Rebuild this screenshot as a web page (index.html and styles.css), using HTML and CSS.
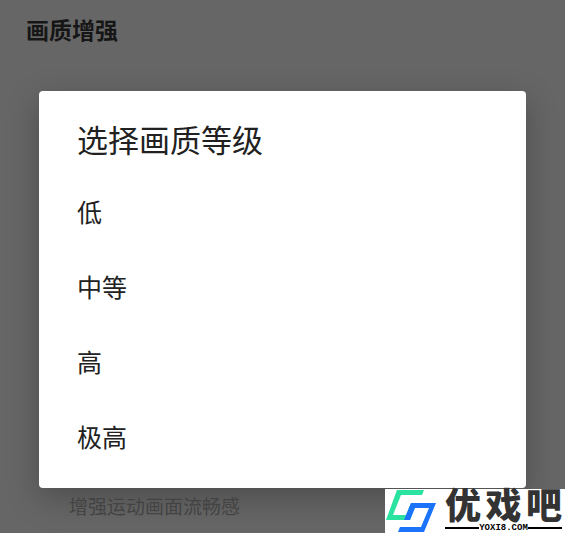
FILE: index.html
```html
<!DOCTYPE html>
<html lang="zh-CN">
<head>
    <meta charset="UTF-8">
    <meta name="viewport" content="width=device-width, initial-scale=1.0">
    <title>画质增强</title>
    <link rel="stylesheet" href="styles.css">
</head>
<body>

    <header class="page-header">
        <h1>画质增强</h1>
    </header>

    <div class="dialog" role="dialog" aria-labelledby="dialogTitle">
        <h2 id="dialogTitle">选择画质等级</h2>
        <ul class="options">
            <li><button type="button">低</button></li>
            <li><button type="button">中等</button></li>
            <li><button type="button">高</button></li>
            <li><button type="button">极高</button></li>
        </ul>
    </div>

    <p class="description">增强运动画面流畅感</p>

    <div class="watermark">
        <svg class="logo" viewBox="0 0 54 44" aria-hidden="true">
            <path fill="#2be3a0" d="M12 1H39L37 6H16L8 26H21L26 14H31L25 31H1Z"/>
            <path fill="#1a73f8" d="M26 14H51L39 43H13L15 38H36L44 19H30L25 31H19Z"/>
        </svg>
        <div class="brand">
            <div class="brand-name">
                <span>优</span>
                <span>戏</span>
                <span>吧</span>
            </div>
            <span class="brand-site">YOXI8.COM</span>
        </div>
    </div>

</body>
</html>
```

FILE: styles.css
```css
* {
    margin: 0;
    padding: 0;
    box-sizing: border-box;
}

body {
    font-family: "Noto Sans CJK SC", sans-serif;
    background: #666;
    color: #212121;
    min-height: 100vh;
    overflow: hidden;
}

.page-header {
    padding: 13px 26px 46px;
}

h1 {
    font-size: 23px;
    line-height: 32px;
    font-weight: bold;
    color: #161616;
}

.dialog {
    margin: 0 39px;
    padding: 24px 0 14px;
    background: #fff;
    border-radius: 4px;
    box-shadow: 0 10px 32px rgba(0, 0, 0, 0.25);
}

h2 {
    padding: 0 38px;
    margin-bottom: 11px;
    font-size: 31px;
    line-height: 48px;
    font-weight: normal;
}

.options {
    list-style: none;
}

.options button {
    display: block;
    width: 100%;
    padding: 0 38px;
    border: none;
    background: none;
    font-family: inherit;
    font-size: 25px;
    line-height: 75px;
    color: #212121;
    text-align: left;
    cursor: pointer;
}

.options button:hover {
    background: #f2f2f2;
}

.description {
    padding: 4px 69px 0;
    font-size: 19px;
    line-height: 28px;
    color: #434343;
}

.watermark {
    position: absolute;
    right: 0;
    bottom: 0;
    display: flex;
    width: 180px;
    height: 44px;
    padding-right: 3px;
    background: #fff;
}

.logo {
    width: 54px;
    height: 44px;
}

.brand {
    flex: 1;
    padding-left: 6px;
}

.brand-name {
    display: flex;
    justify-content: space-between;
    font-size: 36px;
    line-height: 28px;
    font-weight: 900;
    color: #333;
}

.brand-site {
    display: flex;
    align-items: center;
    margin-top: 6px;
    font-family: "Liberation Mono", monospace;
    font-size: 9px;
    line-height: 10px;
    font-weight: bold;
    color: #000;
}

.brand-site::before,
.brand-site::after {
    content: "";
    flex: 1;
    height: 2px;
    background: #000;
}
```
